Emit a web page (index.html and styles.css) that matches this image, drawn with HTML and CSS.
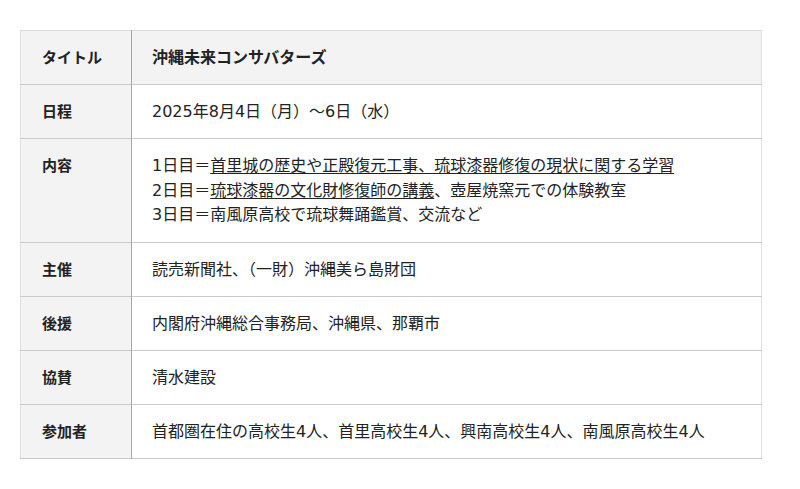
FILE: index.html
```html
<!DOCTYPE html>
<html lang="ja">
<head>
<meta charset="utf-8">
<link rel="stylesheet" href="styles.css">
</head>
<body>
<table class="info">
  <tr class="head">
    <th>タイトル</th>
    <td class="title">沖縄未来コンサバターズ</td>
  </tr>
  <tr>
    <th>日程</th>
    <td>2025年8月4日（月）〜6日（水）</td>
  </tr>
  <tr>
    <th>内容</th>
    <td class="multi">1日目＝<span class="u">首里城の歴史や正殿復元工事、琉球漆器修復の現状に関する学習</span><br>2日目＝<span class="u">琉球漆器の文化財修復師の講義</span>、壺屋焼窯元での体験教室<br>3日目＝南風原高校で琉球舞踊鑑賞、交流など</td>
  </tr>
  <tr>
    <th>主催</th>
    <td>読売新聞社、（一財）沖縄美ら島財団</td>
  </tr>
  <tr>
    <th>後援</th>
    <td>内閣府沖縄総合事務局、沖縄県、那覇市</td>
  </tr>
  <tr>
    <th>協賛</th>
    <td>清水建設</td>
  </tr>
  <tr>
    <th>参加者</th>
    <td>首都圏在住の高校生4人、首里高校生4人、興南高校生4人、南風原高校生4人</td>
  </tr>
</table>
</body>
</html>
```
FILE: styles.css
```css
html, body {
  margin: 0;
  padding: 0;
  background: #fff;
}
body {
  padding: 30px 20px;
  font-family: "DejaVu Sans", "Noto Sans CJK JP", sans-serif;
  color: #222;
}
.info {
  width: 742px;
  border-collapse: collapse;
  border-top: 1px solid #dcdcdc;
  border-left: 1px solid #e2e2e2;
  border-right: 1px solid #e2e2e2;
}
.info tr {
  border-bottom: 1px solid #cacaca;
}
.info th,
.info td {
  padding: 15px 20px 14px;
  vertical-align: top;
  text-align: left;
  line-height: 24px;
}
.info th {
  width: 70px;
  background: #f3f3f3;
  font-size: 15px;
  font-weight: bold;
  border-right: 1px solid #a8a8a8;
  white-space: nowrap;
  padding-left: 21px;
  padding-right: 19px;
}
.info td {
  font-size: 16px;
  font-weight: normal;
}
.info td.title {
  background: #f3f3f3;
  font-weight: bold;
  font-size: 16px;
}
.info .u {
  text-decoration: underline;
  text-underline-offset: 2px;
}
.info td.multi {
  line-height: 24.5px;
}
```
